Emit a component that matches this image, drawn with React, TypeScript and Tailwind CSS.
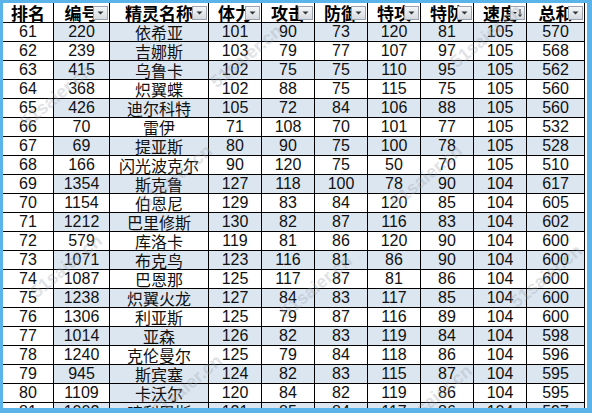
import React from "react";

type Row = [string, string, string, string, string, string, string, string, string, string];

const rows: Row[] = [
  ["61", "220", "依希亚", "101", "90", "73", "120", "81", "105", "570"],
  ["62", "239", "吉娜斯", "103", "79", "77", "107", "97", "105", "568"],
  ["63", "415", "乌鲁卡", "102", "75", "75", "110", "95", "105", "562"],
  ["64", "368", "炽翼蝶", "102", "88", "75", "115", "75", "105", "560"],
  ["65", "426", "迪尔科特", "105", "72", "84", "106", "88", "105", "560"],
  ["66", "70", "雷伊", "71", "108", "70", "101", "77", "105", "532"],
  ["67", "69", "提亚斯", "80", "90", "75", "100", "78", "105", "528"],
  ["68", "166", "闪光波克尔", "90", "120", "75", "50", "70", "105", "510"],
  ["69", "1354", "斯克鲁", "127", "118", "100", "78", "90", "104", "617"],
  ["70", "1154", "伯恩尼", "129", "83", "84", "120", "85", "104", "605"],
  ["71", "1212", "巴里修斯", "130", "82", "87", "116", "83", "104", "602"],
  ["72", "579", "库洛卡", "119", "81", "86", "120", "90", "104", "600"],
  ["73", "1071", "布克鸟", "123", "116", "81", "86", "90", "104", "600"],
  ["74", "1087", "巴恩那", "125", "117", "87", "81", "86", "104", "600"],
  ["75", "1238", "炽翼火龙", "127", "84", "83", "117", "85", "104", "600"],
  ["76", "1306", "利亚斯", "125", "79", "87", "116", "89", "104", "600"],
  ["77", "1014", "亚森", "126", "82", "83", "119", "84", "104", "598"],
  ["78", "1240", "克伦曼尔", "125", "79", "84", "118", "86", "104", "596"],
  ["79", "945", "斯宾塞", "124", "82", "83", "115", "87", "104", "595"],
  ["80", "1109", "卡沃尔", "120", "84", "82", "119", "86", "104", "595"],
  ["81", "1002", "暗利巴斯", "121", "85", "84", "117", "86", "104", "597"],
];

const headers = ["排名", "编号", "精灵名称", "体力", "攻击", "防御", "特攻", "特防", "速度", "总和"];

const blueName = new Set(["62", "80"]);

function FilterButton({ sorted }: { sorted?: boolean }) {
  return (
    <div className="absolute right-[1px] bottom-[2px] w-[15px] h-[14px] border border-[#9ca3af] bg-gradient-to-b from-[#f4f6f8] to-[#d6dbe1] flex items-center justify-center">
      {sorted ? (
        <svg width="11" height="10" viewBox="0 0 11 10">
          <path d="M1 4 L5 4 L3 6 Z" fill="#222" />
          <path d="M8 1 L8 8" stroke="#222" strokeWidth="1" />
          <path d="M6.5 6.5 L8 8.5 L9.5 6.5" stroke="#222" strokeWidth="1" fill="none" />
        </svg>
      ) : (
        <svg width="9" height="6" viewBox="0 0 9 6">
          <path d="M1.5 1.5 L7.5 1.5 L4.5 4.5 Z" fill="#333" />
        </svg>
      )}
    </div>
  );
}

const marks: [number, number][] = [
  [10, 80], [200, 40], [440, 20], [130, 160], [380, 160],
  [20, 250], [270, 270], [500, 260], [140, 370], [390, 380],
];

export default function App() {
  return (
    <div className="w-[592px] h-[413px] bg-[#5ab4ea] pt-[3px] pl-[3px] pr-[5px] pb-[5px] overflow-hidden">
      <div className="relative w-full h-full bg-white overflow-hidden">
        <div
          className="grid grid-cols-[51px_56px_99px_53px_53px_53px_53px_53px_53px_58px] text-[#111]"
          style={{ fontFamily: '"Liberation Sans", "Noto Sans CJK SC", sans-serif' }}
        >
          {headers.map((h, i) => (
            <div
              key={h}
              className="relative h-[20px] border-r border-b border-black flex items-center justify-center overflow-hidden bg-white"
            >
              <span
                className="text-[17px] font-bold leading-none whitespace-nowrap text-black"
                style={{ fontFamily: '"Noto Sans CJK SC", sans-serif' }}
              >
                {h}
              </span>
              {i > 0 && <FilterButton sorted={i === 8} />}
            </div>
          ))}
          {rows.map((r) => {
            const odd = parseInt(r[0], 10) % 2 === 1;
            return r.map((c, j) => {
              const blue = j > 0 && (odd || (j === 2 && blueName.has(r[0])));
              return (
                <div
                  key={r[0] + "-" + j}
                  className={
                    "h-[19px] border-r border-b border-black flex items-center justify-center overflow-hidden whitespace-nowrap text-[16px] leading-none " +
                    (blue ? "bg-[#dce6f1]" : "bg-white")
                  }
                  style={j === 2 ? { fontFamily: '"Noto Sans CJK SC", sans-serif' } : undefined}
                >
                  {c}
                </div>
              );
            });
          })}
        </div>
        {marks.map(([x, y], k) => (
          <div
            key={k}
            className="absolute pointer-events-none text-[18px] font-bold text-[#9aa3ad] opacity-30 -rotate-[40deg] whitespace-nowrap"
            style={{ left: x, top: y, fontFamily: '"Liberation Sans", sans-serif' }}
          >
            51saier.cn
          </div>
        ))}
      </div>
    </div>
  );
}
